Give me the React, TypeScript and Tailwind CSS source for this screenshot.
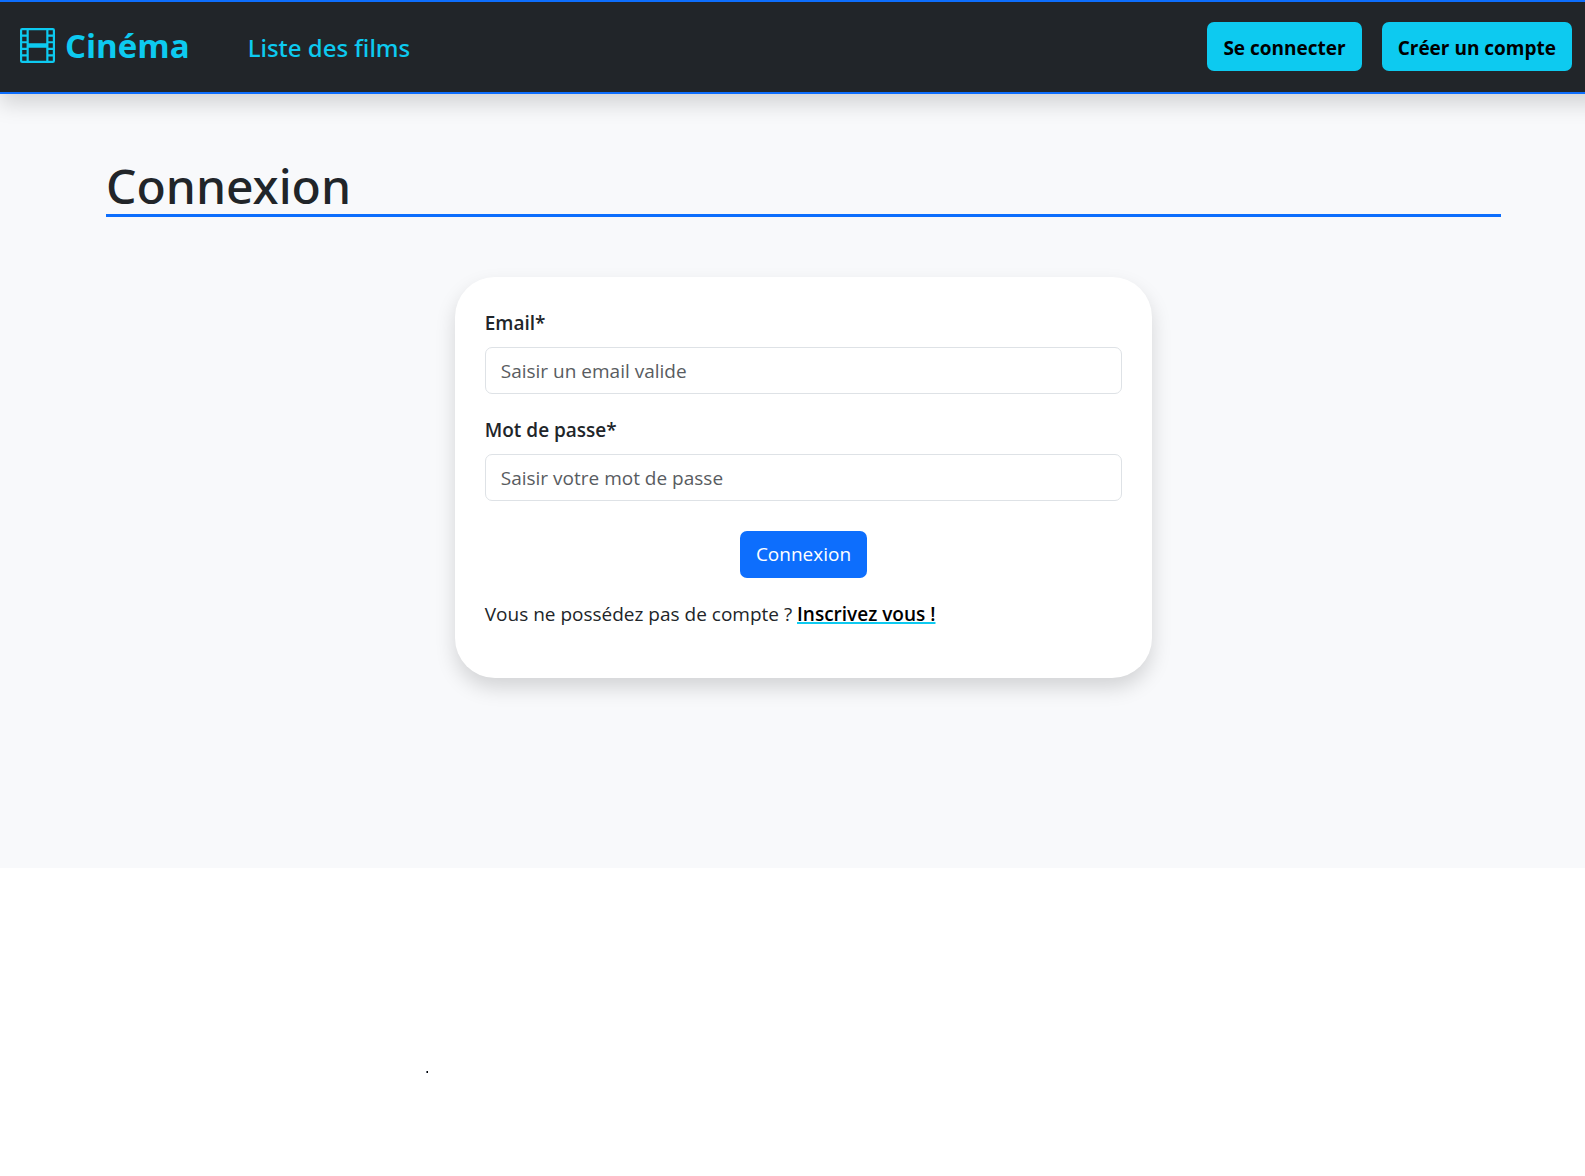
import type { ReactNode } from "react";
import { BsFilm } from "react-icons/bs";

const accountLinks = [
  { href: "#connexion", label: "Se connecter" },
  { href: "#inscription", label: "Créer un compte" },
];

const fields = [
  { id: "email", type: "email", label: "Email*", placeholder: "Saisir un email valide" },
  { id: "password", type: "password", label: "Mot de passe*", placeholder: "Saisir votre mot de passe" },
];

function SiteHeader() {
  return (
    <header className="relative flex h-[94px] items-center border-y-2 border-[#0d6efd] bg-[#212529] pr-[35px] pb-[2px] pl-5 shadow-[0_10px_20px_rgba(0,0,0,0.15)]">
      <a href="#accueil" className="flex items-center gap-[10px] pb-[2px] text-[#0dcaf0]">
        <BsFilm className="size-[35px]" />
        <span className="pt-[2px] text-[33px] leading-[44px] font-bold">Cinéma</span>
      </a>
      <nav className="ml-[58px] pt-1">
        <a href="#films" className="font-['Noto_Sans','Open_Sans',sans-serif] text-[24px] font-medium text-[#0dcaf0]">
          Liste des films
        </a>
      </nav>
      <div className="ml-auto flex gap-5">
        {accountLinks.map((link) => (
          <a
            key={link.href}
            href={link.href}
            className="rounded-[7px] bg-[#0dcaf0] px-4 pt-3 pb-2 text-[19px] leading-[29px] font-bold text-black"
          >
            {link.label}
          </a>
        ))}
      </div>
    </header>
  );
}

function PageTitle({ children }: { children: ReactNode }) {
  return (
    <h1 className="border-b-[3px] border-[#0d6efd] pt-1 font-['Noto_Sans','Open_Sans',sans-serif] text-[48px] leading-[56px] font-medium">
      {children}
    </h1>
  );
}

function LoginForm() {
  return (
    <form className="mx-auto mt-[60px] w-1/2 rounded-[40px] bg-white px-[30px] pt-[30px] pb-[49px] shadow-[0_10px_20px_rgba(0,0,0,0.15)]">
      {fields.map((field) => (
        <div key={field.id} className="mb-5">
          <label htmlFor={field.id} className="mb-[10px] block pt-[2px] leading-[28px] font-semibold">
            {field.label}
          </label>
          <input
            id={field.id}
            type={field.type}
            placeholder={field.placeholder}
            className="block h-[47px] w-full rounded-[7px] border border-[#dee2e6] bg-white px-[15px] placeholder:text-[#595c5f]"
          />
        </div>
      ))}
      <button
        type="submit"
        className="mx-auto mt-[30px] block h-[47px] rounded-[7px] bg-[#0d6efd] px-4 text-white"
      >
        Connexion
      </button>
      <p className="mt-[21px] leading-[30px]">
        Vous ne possédez pas de compte ?{" "}
        <a
          href="#inscription"
          className="font-semibold text-black underline decoration-[#0dcaf0] decoration-2 underline-offset-1"
        >
          Inscrivez vous !
        </a>
      </p>
    </form>
  );
}

export default function App() {
  return (
    <div className="min-h-screen overflow-x-clip bg-white font-['Open_Sans','Noto_Sans',sans-serif] text-[19px] text-[#212529]">
      {/* the page row runs past the right edge, like an ungutterred grid row */}
      <div className="-mr-[22px]">
        <SiteHeader />
        <main className="bg-[#f8f9fb] px-[106px] pt-[60px] pb-[190px]">
          <PageTitle>Connexion</PageTitle>
          <LoginForm />
        </main>
      </div>
      <footer className="px-[26.9%] pt-[203px]">
        <div className="size-[2px] border-l border-gray-500 bg-black" />
      </footer>
    </div>
  );
}
